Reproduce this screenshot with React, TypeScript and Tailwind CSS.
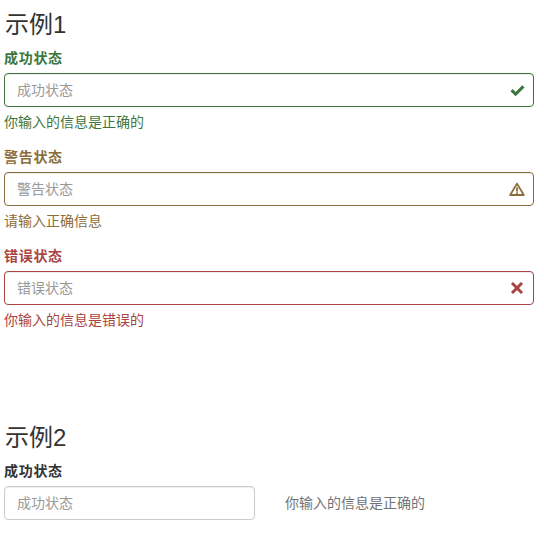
const font = {
  fontFamily:
    '"Liberation Sans", Arial, "Noto Sans CJK SC", sans-serif',
};

type State = "success" | "warning" | "error";

const STATES: Record<
  State,
  { label: string; help: string; text: string; border: string }
> = {
  success: {
    label: "成功状态",
    help: "你输入的信息是正确的",
    text: "text-[#3c763d]",
    border: "border-[#3c763d]",
  },
  warning: {
    label: "警告状态",
    help: "请输入正确信息",
    text: "text-[#8a6d3b]",
    border: "border-[#8a6d3b]",
  },
  error: {
    label: "错误状态",
    help: "你输入的信息是错误的",
    text: "text-[#a94442]",
    border: "border-[#a94442]",
  },
};

function FeedbackIcon({ state }: { state: State }) {
  if (state === "success")
    return (
      <svg width="15" height="13" viewBox="0 0 15 13" fill="#3c763d">
        <path d="M0.5 7.2 L2.7 5 L5.6 7.9 L12.3 1.2 L14.5 3.4 L5.6 12.3 Z" />
      </svg>
    );
  if (state === "warning")
    return (
      <svg width="16" height="14" viewBox="0 0 16 14">
        <path
          d="M8 1.6 L14.8 13 L1.2 13 Z"
          fill="none"
          stroke="#8a6d3b"
          strokeWidth="1.8"
          strokeLinejoin="round"
        />
        <rect x="7.1" y="5.4" width="1.8" height="4.2" fill="#8a6d3b" />
        <rect x="7.1" y="10.3" width="1.8" height="1.6" fill="#8a6d3b" />
      </svg>
    );
  return (
    <svg width="12" height="12" viewBox="0 0 12 12">
      <path
        d="M2 2 L10 10 M10 2 L2 10"
        stroke="#a94442"
        strokeWidth="3"
        strokeLinecap="square"
      />
    </svg>
  );
}

function StateGroup({ state }: { state: State }) {
  const s = STATES[state];
  return (
    <div className="mb-[15px]">
      <label className={`block h-5 mb-[5px] text-sm font-bold leading-5 tracking-[0.7px] ${s.text}`}>
        {s.label}
      </label>
      <div className="relative">
        <input
          style={font}
          placeholder={s.label}
          className={`block w-full h-[34px] rounded border ${s.border} bg-white px-3 pr-[42px] text-sm text-[#555] placeholder:text-[#999] shadow-[inset_0_1px_1px_rgba(0,0,0,0.075)] outline-none`}
        />
        <span className="absolute right-0 top-0 flex h-[34px] w-[34px] items-center justify-center">
          <FeedbackIcon state={state} />
        </span>
      </div>
      <p className={`mt-[5px] text-sm leading-5 ${s.text}`}>{s.help}</p>
    </div>
  );
}

export default function App() {
  return (
    <div style={font} className="min-h-[537px] bg-white pl-1 pr-[10px] pt-3 text-sm text-[#333]">
      <h3 className="mb-[10px] pl-px text-2xl font-normal leading-[26px]">示例1</h3>
      <StateGroup state="success" />
      <StateGroup state="warning" />
      <StateGroup state="error" />

      <h3 className="mt-[95px] mb-[10px] pl-px text-2xl font-normal leading-[26px]">示例2</h3>
      <label className="block h-5 mb-[5px] text-sm font-bold leading-5 tracking-[0.7px] text-[#333]">
        成功状态
      </label>
      <div className="flex items-center gap-[30px]">
        <input
          style={font}
          placeholder="成功状态"
          className="block w-[251px] h-[34px] rounded border border-[#ccc] bg-white px-3 text-sm text-[#555] placeholder:text-[#999] shadow-[inset_0_1px_1px_rgba(0,0,0,0.075)] outline-none"
        />
        <span className="text-sm leading-5 text-[#737373]">你输入的信息是正确的</span>
      </div>
    </div>
  );
}
